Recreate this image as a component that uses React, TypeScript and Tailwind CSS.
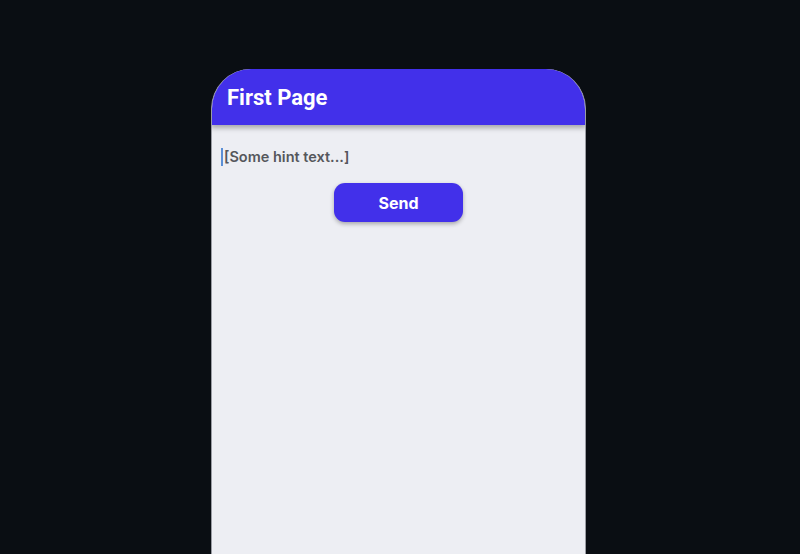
import React from 'react';

export default function App() {
  return (
    <div className="w-[800px] h-[554px] bg-[#0a0e13] flex pl-[211px] pt-[69px] overflow-hidden">
      {/* Phone frame */}
      <div className="w-[375px] h-[485px] rounded-t-[40px] overflow-hidden bg-[#edeef3] border-x border-[#9a9ca3] flex flex-col">
        {/* App bar */}
        <header className="h-[56px] shrink-0 bg-[#4230ea] flex items-center px-4 shadow-[0_3px_5px_rgba(0,0,0,0.3)] relative z-10 -mx-px">
          <h1 className="text-white text-[22px] font-bold" style={{ fontFamily: 'Roboto, sans-serif' }}>
            First Page
          </h1>
        </header>

        {/* Body */}
        <main className="flex flex-col px-[9px] pt-[22px]">
          <div className="flex items-center h-[20px]">
            <span className="w-[2px] h-[18px] bg-[#5b8fd6] mr-px" />
            <span
              className="text-[14.5px] font-semibold text-[#55575c]"
              style={{ fontFamily: 'Inter, sans-serif' }}
            >
              [Some hint text...]
            </span>
          </div>
          <div className="flex justify-center mt-[16px]">
            <button
              className="w-[129px] h-[39px] rounded-[11px] bg-[#4230ea] text-white text-[16px] font-bold shadow-[0_2px_4px_rgba(0,0,0,0.3)]"
              style={{ fontFamily: 'Inter, sans-serif' }}
            >
              Send
            </button>
          </div>
        </main>
      </div>
    </div>
  );
}
